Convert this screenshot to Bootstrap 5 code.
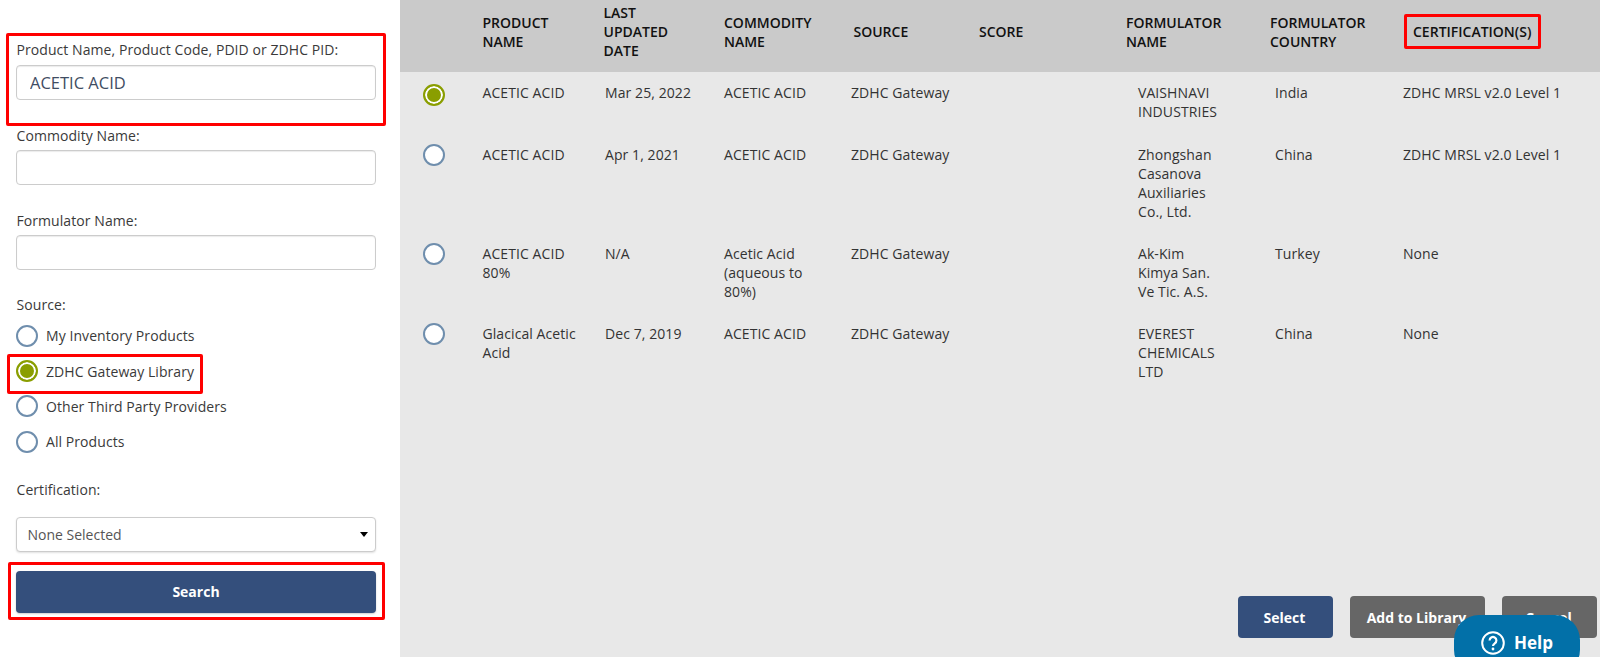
<!DOCTYPE html>
<html lang="en">
<head>
<meta charset="utf-8">
<title>Product search</title>
<link href="https://cdn.jsdelivr.net/npm/bootstrap@5.3.0/dist/css/bootstrap.min.css" rel="stylesheet">
<style>
html,body{height:657px;overflow:hidden}
body{font-family:"Open Sans","Liberation Sans",sans-serif;font-size:14px;line-height:19px;color:#333;background:#fff}
.page-wrap{height:657px}
.side-panel{width:400px;flex:none;padding:40px 24px 0 16px}
.field-group{margin-bottom:26px}
.field-group:nth-child(3){margin-bottom:25px}
.field-label{display:block;margin-bottom:6px;padding-left:.5px;font-size:14px;line-height:19px;letter-spacing:.07px;color:#3a3a3a}
.field-group+.field-group .field-label{margin-bottom:5px}
.side-panel .form-control{height:35px;border-radius:4px;border-color:#ccc;box-shadow:inset 0 1px 1px rgba(0,0,0,.08);font-size:16.5px;padding:0 13px;color:#3f4d63}
.side-panel .form-select{height:35px;border-radius:4px;border-color:#ccc;box-shadow:0 1px 2px rgba(0,0,0,.12);font-size:14px;padding:0 10.5px;color:#555;background-size:8px 5px;background-position:right 7px center;background-image:url("data:image/svg+xml,%3Csvg xmlns='http://www.w3.org/2000/svg' viewBox='0 0 10 6'%3E%3Cpath d='M0 0h10L5 6z' fill='%23000'/%3E%3C/svg%3E")}
.radio-dot.form-check-input{width:22px;height:22px;margin:0;flex:none;border:2px solid #6f8ead;background:#fff;float:none}
.radio-dot.form-check-input:checked{border-color:#8a9e00;background:#8a9e00;box-shadow:inset 0 0 0 2px #fff}
.radio-row{height:35.4px;gap:8px;margin:0;letter-spacing:.07px;color:#3a3a3a}
.radio-list{margin-top:.5px;margin-bottom:20px}
.label-tight{margin-bottom:18px}
.btn-navy{background:#344f7c;color:#fff;font-weight:700;font-size:14px;border:0;border-radius:4px}
.btn-navy:hover{background:#344f7c;color:#fff}
.btn-slate{background:#666;color:#fff;font-weight:700;font-size:14px;border:0;border-radius:4px}
.btn-slate:hover{background:#666;color:#fff}
.search-btn{height:42px;margin-top:19px;box-shadow:0 1px 2px rgba(0,0,0,.2)}
.results{background:#e8e8e8;min-width:0}
.result-table{table-layout:fixed;width:1200px;margin:0;--bs-table-bg:transparent;color:#333;font-size:14px;line-height:19px}
.result-table>thead th{background:#cacaca;height:72px;padding:3px 10px 12px;vertical-align:middle;border:0;font-weight:600;color:#111;line-height:19px;text-transform:uppercase}
.result-table>tbody td{padding:13px 10px 10px;vertical-align:top;border:0;background:transparent;color:#333;letter-spacing:.08px}
.result-table>tbody tr:first-child td{padding-top:11px;padding-bottom:11px}
.result-table>tbody td.radio-cell,.result-table>tbody tr:first-child td.radio-cell{padding:12px 0 0 23px}
.th-source{padding-left:12.5px!important}
.td-date{padding-left:11.5px!important}
.td-form{padding-left:22px!important}
.td-country{padding-left:15px!important}
.th-cert{padding-left:20px!important}
.action-bar{margin-top:auto;padding:0 3px 19px 0;gap:17px}
.action-bar .btn{height:42px;padding:0 2px 0 0}
.w-select{width:95px}
.w-add{width:135px}
.w-cancel{width:95px}
.help-pill{position:fixed;left:1454px;top:615px;width:126px;height:60px;border-radius:25px;background:#0270a8;color:#fff;font-size:17px;font-weight:700;line-height:24px;padding-top:16px;gap:9px}
.red-box{position:absolute;border:3px solid #f00;border-radius:2px;pointer-events:none}
.rb-a{left:6px;top:33px;width:380px;height:93px}
.rb-b{left:7px;top:354px;width:196px;height:40px}
.rb-c{left:8px;top:562px;width:377px;height:58px}
.rb-d{left:1404px;top:14px;width:137px;height:35px}
</style>
</head>
<body>
<div class="page-wrap d-flex">
  <form class="side-panel">
    <div class="field-group">
      <label class="field-label" for="f1">Product Name, Product Code, PDID or ZDHC PID:</label>
      <input id="f1" class="form-control" type="text" value="ACETIC ACID">
    </div>
    <div class="field-group">
      <label class="field-label" for="f2">Commodity Name:</label>
      <input id="f2" class="form-control" type="text">
    </div>
    <div class="field-group">
      <label class="field-label" for="f3">Formulator Name:</label>
      <input id="f3" class="form-control" type="text">
    </div>
    <div class="field-label mb-1">Source:</div>
    <div class="radio-list">
      <label class="radio-row d-flex align-items-center"><input class="form-check-input radio-dot" type="radio" name="src">My Inventory Products</label>
      <label class="radio-row d-flex align-items-center"><input class="form-check-input radio-dot" type="radio" name="src" checked>ZDHC Gateway Library</label>
      <label class="radio-row d-flex align-items-center"><input class="form-check-input radio-dot" type="radio" name="src">Other Third Party Providers</label>
      <label class="radio-row d-flex align-items-center"><input class="form-check-input radio-dot" type="radio" name="src">All Products</label>
    </div>
    <label class="field-label label-tight" for="f4">Certification:</label>
    <select id="f4" class="form-select"><option>None Selected</option></select>
    <button type="button" class="btn btn-navy w-100 search-btn d-block">Search</button>
  </form>
  <main class="results flex-grow-1 d-flex flex-column">
    <table class="table result-table">
      <colgroup>
        <col style="width:72.5px"><col style="width:121px"><col style="width:120.5px"><col style="width:127px"><col style="width:128px"><col style="width:147px"><col style="width:144px"><col style="width:133px"><col style="width:207px">
      </colgroup>
      <thead>
        <tr>
          <th></th>
          <th>Product<br>Name</th>
          <th>Last<br>Updated<br>Date</th>
          <th>Commodity<br>Name</th>
          <th class="th-source">Source</th>
          <th>Score</th>
          <th>Formulator<br>Name</th>
          <th>Formulator<br>Country</th>
          <th class="th-cert">Certification(s)</th>
        </tr>
      </thead>
      <tbody>
        <tr>
          <td class="radio-cell"><input class="form-check-input radio-dot d-block" type="radio" name="res" checked aria-label="Select row 1"></td>
          <td>ACETIC ACID</td><td class="td-date">Mar 25, 2022</td><td>ACETIC ACID</td><td>ZDHC Gateway</td><td></td>
          <td class="td-form">VAISHNAVI<br>INDUSTRIES</td><td class="td-country">India</td><td>ZDHC MRSL v2.0 Level 1</td>
        </tr>
        <tr>
          <td class="radio-cell"><input class="form-check-input radio-dot d-block" type="radio" name="res" aria-label="Select row 2"></td>
          <td>ACETIC ACID</td><td class="td-date">Apr 1, 2021</td><td>ACETIC ACID</td><td>ZDHC Gateway</td><td></td>
          <td class="td-form">Zhongshan<br>Casanova<br>Auxiliaries<br>Co., Ltd.</td><td class="td-country">China</td><td>ZDHC MRSL v2.0 Level 1</td>
        </tr>
        <tr>
          <td class="radio-cell"><input class="form-check-input radio-dot d-block" type="radio" name="res" aria-label="Select row 3"></td>
          <td>ACETIC ACID<br>80%</td><td class="td-date">N/A</td><td>Acetic Acid<br>(aqueous to<br>80%)</td><td>ZDHC Gateway</td><td></td>
          <td class="td-form">Ak-Kim<br>Kimya San.<br>Ve Tic. A.S.</td><td class="td-country">Turkey</td><td>None</td>
        </tr>
        <tr>
          <td class="radio-cell"><input class="form-check-input radio-dot d-block" type="radio" name="res" aria-label="Select row 4"></td>
          <td>Glacical Acetic<br>Acid</td><td class="td-date">Dec 7, 2019</td><td>ACETIC ACID</td><td>ZDHC Gateway</td><td></td>
          <td class="td-form">EVEREST<br>CHEMICALS<br>LTD</td><td class="td-country">China</td><td>None</td>
        </tr>
      </tbody>
    </table>
    <div class="action-bar d-flex justify-content-end">
      <button type="button" class="btn btn-navy w-select">Select</button>
      <button type="button" class="btn btn-slate w-add">Add to Library</button>
      <button type="button" class="btn btn-slate w-cancel">Cancel</button>
    </div>
  </main>
</div>
<div class="red-box rb-a"></div>
<div class="red-box rb-b"></div>
<div class="red-box rb-c"></div>
<div class="red-box rb-d"></div>
<div class="help-pill d-flex justify-content-center align-items-start">
  <svg width="24" height="24" viewBox="0 0 24 24" fill="none" stroke="#fff" stroke-width="2" aria-hidden="true"><circle cx="12" cy="12" r="10.8"/><path d="M8.6 9.4a3.4 3.4 0 1 1 5.2 2.9c-1.2.8-1.8 1.4-1.8 2.7" stroke-width="2.2"/><circle cx="12" cy="18" r="1.4" fill="#fff" stroke="none"/></svg>
  <span>Help</span>
</div>
<script src="https://cdn.jsdelivr.net/npm/bootstrap@5.3.0/dist/js/bootstrap.bundle.min.js"></script>
</body>
</html>
